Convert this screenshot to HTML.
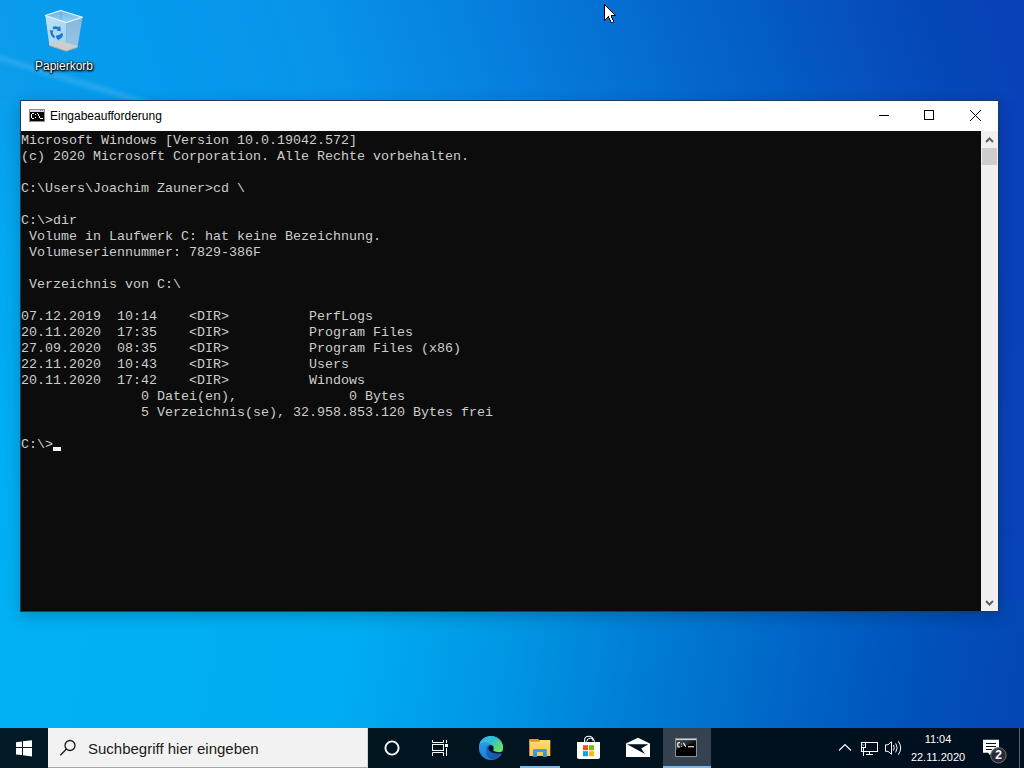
<!DOCTYPE html>
<html><head><meta charset="utf-8">
<style>
html,body{margin:0;padding:0;width:1024px;height:768px;overflow:hidden;}
body{position:relative;font-family:"Liberation Sans",sans-serif;background:#0460c4;}
.abs{position:absolute;}
#bg{position:absolute;left:0;top:0;width:1024px;height:728px;background:#0460c4;}
#bgt{position:absolute;left:0;top:0;width:1024px;height:110px;
background:linear-gradient(72deg,#0c9cea 0px,#059bee 150px,#0894ea 320px,#067ede 500px,#0460c8 720px,#0648b8 900px,#0840b8 1024px);}
#bgl{position:absolute;left:0;top:100px;width:30px;height:520px;background:linear-gradient(180deg,#0a9eec 0%,#02a8f0 30%,#00adf2 60%,#00b1f4 100%);}
#bgr{position:absolute;left:990px;top:100px;width:34px;height:520px;background:linear-gradient(180deg,#0842ba 0%,#0842ba 30%,#0644b8 100%);}
#bgb{position:absolute;left:0;top:600px;width:1024px;height:128px;
background:linear-gradient(100deg,#02b1f4 0px,#00adf2 350px,#0096e4 510px,#007cd4 650px,#0064c6 800px,#0050ba 930px,#0646b6 1024px);}
#win{position:absolute;left:20px;top:100px;width:977px;height:510px;border:1px solid #1c3a5e;background:#0c0c0c;
 box-shadow:0 4px 14px rgba(0,0,0,0.22);}
#title{position:absolute;left:0;top:0;width:977px;height:30px;background:#fff;}
#title .t{position:absolute;left:29px;top:8px;font-size:12px;color:#000;line-height:14px;white-space:nowrap;}
#con{position:absolute;left:0;top:30px;width:960px;height:480px;background:#0c0c0c;}
#con pre{margin:0;padding-top:2px;font-family:"Liberation Mono",monospace;font-size:13.333px;line-height:16px;color:#cccccc;}
#cur{position:absolute;left:32px;top:316px;width:8px;height:4px;background:#f2f2f2;}
#sb{position:absolute;left:960px;top:30px;width:17px;height:480px;background:#f0f0f0;}
#thumb{position:absolute;left:1px;top:17px;width:15px;height:17px;background:#cdcdcd;}
#task{position:absolute;left:0;top:728px;width:1024px;height:40px;background:linear-gradient(90deg,#021a26 0px,#01141f 500px,#000f1e 1024px);}
#search{position:absolute;left:48px;top:0;width:319px;height:39px;background:#f2f2f2;border-bottom:1px solid #a8a8a8;border-right:1px solid #d4d4d4;}
#search .t{position:absolute;left:40px;top:12px;font-size:15px;line-height:17px;color:#1b1b1b;white-space:nowrap;}
#cmdbtn{position:absolute;left:663px;top:0;width:48px;height:38px;background:#34434f;}
.ul{position:absolute;top:38px;height:2px;background:#7ab8ec;}
#clock{position:absolute;left:900px;top:2px;width:76px;text-align:center;color:#fff;font-size:11px;line-height:18px;}
#deskicon .t{position:absolute;left:0;top:0;width:94px;text-align:center;color:#fff;font-size:12px;
 text-shadow:0 0 1px #000,0 1px 2px #000,1px 1px 2px #000,0 0 3px rgba(0,0,0,0.7);}
svg{shape-rendering:geometricPrecision;}
</style></head><body>
<div id="bg"></div><div id="bgt"></div><div class="abs" style="left:-20px;top:46px;width:260px;height:12px;transform-origin:0 50%;transform:rotate(17deg);background:linear-gradient(180deg,rgba(255,255,255,0) 0%,rgba(160,225,255,0.18) 50%,rgba(255,255,255,0) 100%);"></div><div id="bgl"></div><div id="bgr"></div><div id="bgb"></div>

<!-- recycle bin -->
<div id="deskicon" class="abs" style="left:17px;top:59px;width:94px;height:16px;"><div class="t">Papierkorb</div></div>
<svg class="abs" style="left:40px;top:6px" width="48" height="50" viewBox="0 0 48 50">
 <defs>
  <linearGradient id="bf" x1="0" y1="0" x2="1" y2="1"><stop offset="0" stop-color="#bfe2f6"/><stop offset="1" stop-color="#a2d0ee"/></linearGradient>
  <linearGradient id="br" x1="0" y1="0" x2="0" y2="1"><stop offset="0" stop-color="#86b8dc"/><stop offset="1" stop-color="#9cc6e4"/></linearGradient>
  <linearGradient id="bo" x1="0" y1="0" x2="0.3" y2="1"><stop offset="0" stop-color="#6cb2e0"/><stop offset="1" stop-color="#94d0f2"/></linearGradient>
 </defs>
 <polygon points="26.25,16.6 42.5,11.25 37.5,41.25 26.25,45" fill="url(#br)"/>
 <polygon points="5.3,9.4 26.25,16.6 26.25,45 9.4,39.4" fill="url(#bf)"/>
 <polygon points="9.2,37.6 20.6,35 37.7,40 37.5,41.25 26.25,45 9.4,39.4" fill="#cbcdd0"/>
 <polyline points="9.4,39.4 26.25,45 37.5,41.25" fill="none" stroke="#c4aea2" stroke-width="0.9"/>
 <polygon points="5.3,9.4 20.6,4.4 42.5,11.25 26.25,16.6" fill="url(#bo)"/>
 <path d="M20.8 5 L21.2 13.5" stroke="#62a8d8" stroke-width="1"/>
 <polygon points="5.3,9.4 20.6,4.4 42.5,11.25 26.25,16.6" fill="none" stroke="#eef7fd" stroke-width="1.1" stroke-linejoin="round"/>
 <g fill="#1a7ad6">
  <path d="M12.3 21.2 Q15 19.2 18.3 21 L20.3 20.3 L20.8 25.3 L16.5 24.6 L17.8 23.4 Q15.5 22.3 13.8 23.6 Z"/>
  <path d="M9.5 24.2 L13.8 24.6 L12.7 26.2 Q13.2 29 15 30.3 L14.4 32.3 Q10.5 30.5 10.3 26 Z"/>
  <path d="M16.6 29.3 Q19.8 29.6 21.3 27.3 L23 27.5 Q23.3 31.5 19.5 33.2 L18.5 34.5 L15.8 31.2 Z"/>
 </g>
</svg>

<!-- mouse cursor -->
<svg class="abs" style="left:604px;top:4px;shape-rendering:crispEdges" width="12" height="19" viewBox="0 0 12 19"><rect x="0" y="0" width="1" height="1" fill="#000"/><rect x="0" y="1" width="2" height="1" fill="#000"/><rect x="0" y="2" width="1" height="1" fill="#000"/><rect x="1" y="2" width="1" height="1" fill="#fff"/><rect x="2" y="2" width="1" height="1" fill="#000"/><rect x="0" y="3" width="1" height="1" fill="#000"/><rect x="1" y="3" width="2" height="1" fill="#fff"/><rect x="3" y="3" width="1" height="1" fill="#000"/><rect x="0" y="4" width="1" height="1" fill="#000"/><rect x="1" y="4" width="3" height="1" fill="#fff"/><rect x="4" y="4" width="1" height="1" fill="#000"/><rect x="0" y="5" width="1" height="1" fill="#000"/><rect x="1" y="5" width="4" height="1" fill="#fff"/><rect x="5" y="5" width="1" height="1" fill="#000"/><rect x="0" y="6" width="1" height="1" fill="#000"/><rect x="1" y="6" width="5" height="1" fill="#fff"/><rect x="6" y="6" width="1" height="1" fill="#000"/><rect x="0" y="7" width="1" height="1" fill="#000"/><rect x="1" y="7" width="6" height="1" fill="#fff"/><rect x="7" y="7" width="1" height="1" fill="#000"/><rect x="0" y="8" width="1" height="1" fill="#000"/><rect x="1" y="8" width="7" height="1" fill="#fff"/><rect x="8" y="8" width="1" height="1" fill="#000"/><rect x="0" y="9" width="1" height="1" fill="#000"/><rect x="1" y="9" width="8" height="1" fill="#fff"/><rect x="9" y="9" width="1" height="1" fill="#000"/><rect x="0" y="10" width="1" height="1" fill="#000"/><rect x="1" y="10" width="9" height="1" fill="#fff"/><rect x="10" y="10" width="1" height="1" fill="#000"/><rect x="0" y="11" width="1" height="1" fill="#000"/><rect x="1" y="11" width="6" height="1" fill="#fff"/><rect x="7" y="11" width="5" height="1" fill="#000"/><rect x="0" y="12" width="1" height="1" fill="#000"/><rect x="1" y="12" width="3" height="1" fill="#fff"/><rect x="4" y="12" width="1" height="1" fill="#000"/><rect x="5" y="12" width="2" height="1" fill="#fff"/><rect x="7" y="12" width="1" height="1" fill="#000"/><rect x="0" y="13" width="1" height="1" fill="#000"/><rect x="1" y="13" width="2" height="1" fill="#fff"/><rect x="3" y="13" width="2" height="1" fill="#000"/><rect x="5" y="13" width="2" height="1" fill="#fff"/><rect x="7" y="13" width="1" height="1" fill="#000"/><rect x="0" y="14" width="1" height="1" fill="#000"/><rect x="1" y="14" width="1" height="1" fill="#fff"/><rect x="2" y="14" width="1" height="1" fill="#000"/><rect x="5" y="14" width="1" height="1" fill="#000"/><rect x="6" y="14" width="2" height="1" fill="#fff"/><rect x="8" y="14" width="1" height="1" fill="#000"/><rect x="0" y="15" width="2" height="1" fill="#000"/><rect x="5" y="15" width="1" height="1" fill="#000"/><rect x="6" y="15" width="2" height="1" fill="#fff"/><rect x="8" y="15" width="1" height="1" fill="#000"/><rect x="0" y="16" width="1" height="1" fill="#000"/><rect x="6" y="16" width="1" height="1" fill="#000"/><rect x="7" y="16" width="2" height="1" fill="#fff"/><rect x="9" y="16" width="1" height="1" fill="#000"/><rect x="6" y="17" width="1" height="1" fill="#000"/><rect x="7" y="17" width="2" height="1" fill="#fff"/><rect x="9" y="17" width="1" height="1" fill="#000"/><rect x="7" y="18" width="2" height="1" fill="#000"/></svg>

<div id="win">
 <div id="title">
  <svg class="abs" style="left:8px;top:8px;shape-rendering:crispEdges" width="16" height="13" viewBox="0 0 16 13">
   <rect x="0" y="0" width="16" height="13" fill="#8c9096"/>
   <rect x="1" y="1" width="14" height="2" fill="#d2d8e0"/>
   <rect x="11" y="1" width="1" height="1" fill="#5a7fb0"/><rect x="13" y="1" width="1" height="1" fill="#5a7fb0"/>
   <rect x="1" y="3" width="14" height="9" fill="#000"/>
   <g fill="#fff"><rect x="3" y="4" width="1" height="1"/><rect x="4" y="4" width="1" height="1"/><rect x="2" y="5" width="1" height="1"/><rect x="2" y="6" width="1" height="1"/><rect x="2" y="7" width="1" height="1"/><rect x="2" y="8" width="1" height="1"/><rect x="3" y="9" width="1" height="1"/><rect x="4" y="9" width="1" height="1"/><rect x="6" y="5" width="1" height="1"/><rect x="6" y="8" width="1" height="1"/><rect x="8" y="4" width="1" height="1"/><rect x="9" y="5" width="1" height="1"/><rect x="9" y="6" width="1" height="1"/><rect x="10" y="7" width="1" height="1"/><rect x="10" y="8" width="1" height="1"/><rect x="11" y="9" width="1" height="1"/><rect x="12" y="9" width="1" height="1"/><rect x="13" y="9" width="1" height="1"/></g>
  </svg>
  <span class="t">Eingabeaufforderung</span>
  <div class="abs" style="left:858px;top:14px;width:10px;height:1px;background:#000"></div>
  <div class="abs" style="left:903px;top:9px;width:8px;height:8px;border:1px solid #000"></div>
  <svg class="abs" style="left:949px;top:9px;shape-rendering:crispEdges" width="11" height="11" viewBox="0 0 11 11"><g fill="#000"><rect x="0" y="0" width="1" height="1"/><rect x="1" y="1" width="1" height="1"/><rect x="2" y="2" width="1" height="1"/><rect x="3" y="3" width="1" height="1"/><rect x="4" y="4" width="1" height="1"/><rect x="5" y="5" width="1" height="1"/><rect x="6" y="6" width="1" height="1"/><rect x="7" y="7" width="1" height="1"/><rect x="8" y="8" width="1" height="1"/><rect x="9" y="9" width="1" height="1"/><rect x="10" y="10" width="1" height="1"/><rect x="10" y="0" width="1" height="1"/><rect x="9" y="1" width="1" height="1"/><rect x="8" y="2" width="1" height="1"/><rect x="7" y="3" width="1" height="1"/><rect x="6" y="4" width="1" height="1"/><rect x="5" y="5" width="1" height="1"/><rect x="4" y="6" width="1" height="1"/><rect x="3" y="7" width="1" height="1"/><rect x="2" y="8" width="1" height="1"/><rect x="1" y="9" width="1" height="1"/><rect x="0" y="10" width="1" height="1"/></g></svg>
 </div>
 <div id="con"><pre>Microsoft Windows [Version 10.0.19042.572]
(c) 2020 Microsoft Corporation. Alle Rechte vorbehalten.

C:\Users\Joachim Zauner>cd \

C:\>dir
 Volume in Laufwerk C: hat keine Bezeichnung.
 Volumeseriennummer: 7829-386F

 Verzeichnis von C:\

07.12.2019  10:14    &lt;DIR&gt;          PerfLogs
20.11.2020  17:35    &lt;DIR&gt;          Program Files
27.09.2020  08:35    &lt;DIR&gt;          Program Files (x86)
22.11.2020  10:43    &lt;DIR&gt;          Users
20.11.2020  17:42    &lt;DIR&gt;          Windows
               0 Datei(en),              0 Bytes
               5 Verzeichnis(se), 32.958.853.120 Bytes frei

C:\&gt;</pre><div id="cur"></div></div>
 <div id="sb">
  <svg class="abs" style="left:4px;top:6px" width="9" height="6" viewBox="0 0 9 6"><path d="M1 5 L4.5 1.5 L8 5" fill="none" stroke="#606060" stroke-width="2"/></svg>
  <div id="thumb"></div>
  <svg class="abs" style="left:4px;top:469px" width="9" height="6" viewBox="0 0 9 6"><path d="M1 1 L4.5 4.5 L8 1" fill="none" stroke="#606060" stroke-width="2"/></svg>
 </div>
</div>

<div id="task">
 <!-- start -->
 <svg class="abs" style="left:15px;top:11px" width="18" height="18" viewBox="0 0 18 18">
  <path d="M1 3.2 L7 2.4 V8 H1 Z M8 2.2 L17 1.2 V8 H8 Z M1 9 H7 V16 L1 15.4 Z M8 9 H17 V17.4 L8 16.2 Z" fill="#fff"/>
 </svg>
 <div id="search">
  <svg class="abs" style="left:11px;top:11px" width="18" height="18" viewBox="0 0 18 18">
   <circle cx="11" cy="6.5" r="5" fill="none" stroke="#1b1b1b" stroke-width="1.3"/>
   <path d="M7.5 10 L1.3 16.3" stroke="#1b1b1b" stroke-width="1.4"/>
  </svg>
  <span class="t">Suchbegriff hier eingeben</span>
 </div>
 <!-- cortana -->
 <svg class="abs" style="left:383px;top:11px" width="18" height="18" viewBox="0 0 18 18">
  <circle cx="9" cy="9" r="6.6" fill="none" stroke="#fff" stroke-width="1.9"/>
 </svg>
 <!-- task view -->
 <svg class="abs" style="left:431px;top:11px" width="19" height="18" viewBox="0 0 19 18">
  <g stroke="#fff" stroke-width="1" fill="none">
   <path d="M1.5 1 V3.5 H12.5 V1"/>
   <rect x="1.5" y="5.5" width="11" height="6"/>
   <path d="M1.5 17 V13.5 H12.5 V17"/>
   <path d="M15.5 1 V4 M15.5 9 V17"/>
  </g>
  <rect x="14" y="5" width="3" height="3" fill="#fff"/>
 </svg>
 <!-- edge -->
 <svg class="abs" style="left:476px;top:5px" width="30" height="30" viewBox="0 0 30 30">
  <defs>
   <linearGradient id="egb" x1="0" y1="0" x2="0" y2="1"><stop offset="0" stop-color="#2fa6ee"/><stop offset="1" stop-color="#1b7ddc"/></linearGradient>
   <linearGradient id="egt" x1="0.1" y1="0.1" x2="0.95" y2="0.75"><stop offset="0" stop-color="#38b6ec"/><stop offset="0.45" stop-color="#2fc0d0"/><stop offset="1" stop-color="#6ee25a"/></linearGradient>
   <linearGradient id="egd" x1="0" y1="0" x2="1" y2="1"><stop offset="0" stop-color="#1a6cc8"/><stop offset="1" stop-color="#174f9e"/></linearGradient>
  </defs>
  <circle cx="15" cy="15" r="12.1" fill="url(#egb)"/>
  <path d="M3.1 12.8 C3.8 6.8 8.8 2.9 15 2.9 C21.7 2.9 27.1 8.3 27.1 14.6 C27.1 17.6 25.6 19.3 23.2 19.3 C20.8 19.3 18.6 18.8 17.2 17.6 C18.2 16.3 17.8 13.8 16.2 12.4 C14.2 10.4 11.5 9.2 8.5 9.3 C5.8 9.4 4 10.8 3.1 12.8 Z" fill="url(#egt)"/>
  <path d="M10.2 15.2 C10.4 12.8 12.6 11.7 14.6 12.0 C13.0 12.4 12.2 13.6 12.4 15.4 C12.8 18.4 15.8 19.6 19.2 19.8 C21.4 19.9 23.6 19.8 25.2 19.6 C23.6 23.8 19.6 26.6 15.6 26.2 C12.2 25.8 10.0 22.6 10.0 18.6 Z" fill="url(#egd)"/>
  <path d="M12.4 15.4 C12.2 13.6 13.0 12.4 14.6 12.0 C16.6 12.0 17.8 13.4 17.6 15.4 C17.4 16.8 16.8 17.3 17.2 17.6 C18.6 18.8 20.8 19.4 23.2 19.3 C24.5 19.3 26 19 27.3 18.6 L26.8 20.4 C24.6 20.8 21.4 20.6 19.2 20.2 C15.8 19.8 12.8 18.4 12.4 15.4 Z" fill="#021423"/>
 </svg>
 <!-- explorer -->
 <svg class="abs" style="left:529px;top:11px" width="23" height="19" viewBox="0 0 23 19">
  <defs><linearGradient id="fy" x1="0" y1="0" x2="0" y2="1"><stop offset="0" stop-color="#ffdb6e"/><stop offset="1" stop-color="#ffc63a"/></linearGradient>
  <linearGradient id="fb" x1="0" y1="0" x2="0" y2="1"><stop offset="0" stop-color="#3d9ff0"/><stop offset="1" stop-color="#2d8fe4"/></linearGradient></defs>
  <rect x="0.3" y="1" width="21" height="16" fill="url(#fy)"/>
  <path d="M0.3 0.1 H9.2 L10.6 1.4 V2.9 H0.3 Z" fill="#e39e08"/>
  <rect x="0.3" y="2.9" width="21" height="0.8" fill="#ffe58a" opacity="0.7"/>
  <path d="M4.1 18 V10.9 Q4.1 10 5 10 H16.9 Q17.8 10 17.8 10.9 V18 H14 V13.1 H8.1 V18 Z" fill="url(#fb)"/>
 </svg>
 <div class="ul" style="left:520px;width:40px"></div>
 <!-- store -->
 <svg class="abs" style="left:577px;top:7px" width="24" height="25" viewBox="0 0 24 25">
  <path d="M7.6 7.5 V5.2 Q7.6 1.2 11.8 1.2 Q16 1.2 16 5.2 V6" fill="none" stroke="#fff" stroke-width="1.1"/>
  <path d="M9.8 7.5 V6.4 Q9.8 3.2 13.6 3.2 Q17.4 3.2 17.4 6.4 V7.5" fill="none" stroke="#fff" stroke-width="1.0"/>
  <path d="M0 7 H23 V22 C23 23.1 22.3 24 21 24 H2 C0.8 24 0 23.1 0 22 Z" fill="#fff"/>
  <rect x="6" y="10.2" width="5" height="5" fill="#f25022"/>
  <rect x="12" y="10.2" width="5" height="5" fill="#7fba00"/>
  <rect x="6" y="16.2" width="5" height="5" fill="#00a4ef"/>
  <rect x="12" y="16.2" width="5" height="5" fill="#ffb900"/>
 </svg>
 <!-- mail -->
 <svg class="abs" style="left:626px;top:9px" width="25" height="21" viewBox="0 0 25 21">
  <path d="M0 6.6 L12 0.8 L24 6.6 V20 H0 Z" fill="#fff"/>
  <path d="M1 7.3 L22.4 7.3 L15.1 11.5 L19 16.9 Z" fill="#01121f"/>
 </svg>
 <!-- cmd -->
 <div id="cmdbtn"></div>
 <div class="ul" style="left:663px;width:48px"></div>
 <svg class="abs" style="left:675px;top:10px" width="22" height="19" viewBox="0 0 22 19">
  <defs><linearGradient id="cg" x1="0" y1="0" x2="1" y2="0.3"><stop offset="0" stop-color="#4a4a4a"/><stop offset="0.6" stop-color="#2a2a2a"/><stop offset="1" stop-color="#0a0a0a"/></linearGradient></defs>
  <rect x="0.5" y="0.5" width="21" height="18" fill="#000" stroke="#8a9098" stroke-width="1"/>
  <rect x="1" y="1" width="20" height="1.4" fill="#cdd6e0"/>
  <path d="M1 2.4 H21 V5.5 C15 6 6 8 1 12 Z" fill="url(#cg)"/>
  <g fill="none" stroke="#f4f4f4" stroke-width="1.2">
   <path d="M5 4.6 H3.8 Q2.7 4.6 2.7 6 V7.6 Q2.7 9 3.8 9 H5"/>
   <path d="M8.5 4.8 L10.6 8.6"/>
  </g>
  <rect x="6" y="5.4" width="1" height="1" fill="#ddd"/><rect x="6" y="7.8" width="1" height="1" fill="#ddd"/>
  <rect x="13" y="8.2" width="6" height="1.1" fill="#f4f4f4"/>
 </svg>
 <!-- tray -->
 <svg class="abs" style="left:838px;top:15px" width="14" height="9" viewBox="0 0 14 9"><path d="M1 7.5 L7 1.5 L13 7.5" fill="none" stroke="#fff" stroke-width="1.1"/></svg>
 <svg class="abs" style="left:860px;top:13px" width="19" height="16" viewBox="0 0 19 16">
  <g stroke="#fff" stroke-width="1" fill="none">
   <rect x="1.5" y="1.5" width="16" height="9"/>
   <rect x="1.5" y="1.5" width="4" height="5" fill="#01121f"/>
   <path d="M3.5 6.5 V15"/>
   <path d="M6 13.5 H13 M9.5 10.5 V13.5"/>
   <path d="M2.5 3.5 L3.3 4.5 L4 3.5" stroke-width="0.8"/>
  </g>
 </svg>
 <svg class="abs" style="left:884px;top:12px" width="19" height="17" viewBox="0 0 19 17">
  <g stroke="#fff" stroke-width="1" fill="none">
   <path d="M1.5 4.8 H4 L7.5 1.8 V14.3 L4 11.3 H1.5 Z"/>
   <path d="M9.5 5 Q11 7.8 9.5 10.6"/>
   <path d="M11.7 3.4 Q14.6 7.8 11.7 12.4"/>
   <path d="M14.3 1.2 Q19 8 14.3 14.8"/>
  </g>
 </svg>
 <div id="clock">11:04<br>22.11.2020</div>
 <!-- notifications -->
 <svg class="abs" style="left:982px;top:10px" width="26" height="28" viewBox="0 0 26 28">
  <path d="M1 1.8 H17 V14.8 H9.5 L7.8 17 L6 14.8 H1 Z" fill="#fff"/>
  <g style="shape-rendering:crispEdges" fill="#01101e"><rect x="4" y="5" width="10" height="1"/><rect x="4" y="8" width="10" height="1"/><rect x="4" y="11" width="6" height="1"/></g>
  <circle cx="16.4" cy="17.25" r="7.7" fill="#2a2e33" fill-opacity="0.92" stroke="#7d8084" stroke-width="0.9"/>
  <text x="16.6" y="21.4" text-anchor="middle" font-family="Liberation Sans" font-weight="bold" font-size="12" fill="#fff">2</text>
 </svg>
 <div class="abs" style="left:1019px;top:0;width:1px;height:40px;background:#5a646c"></div>
</div>
</body></html>
